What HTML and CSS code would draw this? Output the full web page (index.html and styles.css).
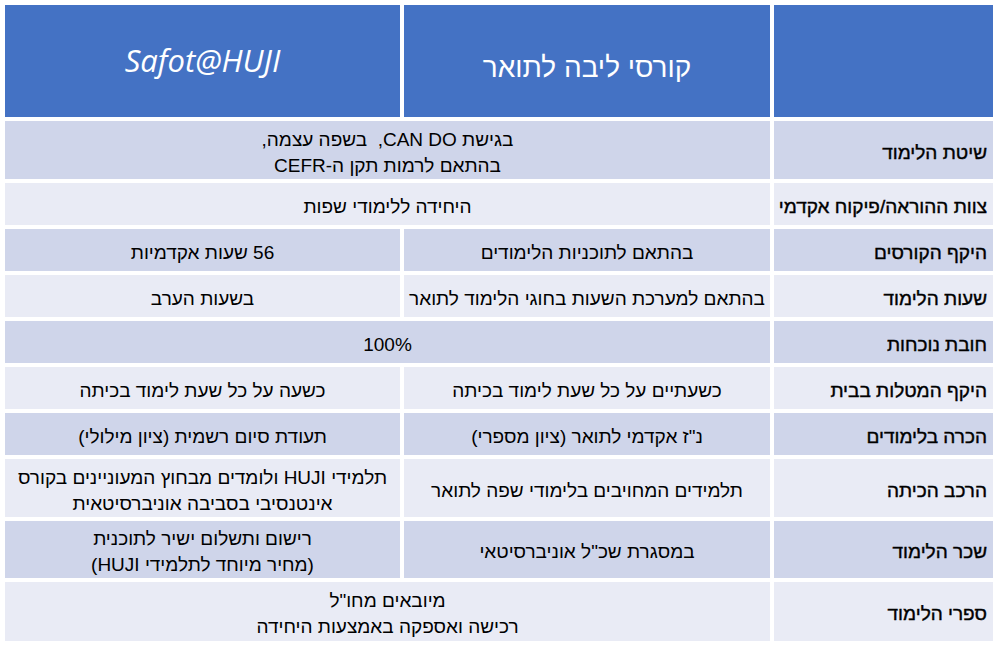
FILE: index.html
```html
<!DOCTYPE html>
<html lang="he">
<head>
<meta charset="utf-8">
<link rel="stylesheet" href="styles.css">
</head>
<body>
<div class="table">
  <div class="cell head"></div>
  <div class="cell head head-he">קורסי ליבה לתואר</div>
  <div class="cell head head-en">Safot@HUJI</div>

  <div class="cell label dark">שיטת הלימוד</div>
  <div class="cell val dark span">בגישת CAN DO,&nbsp; בשפה עצמה,<br>בהתאם לרמות תקן ה-CEFR</div>

  <div class="cell label light">צוות ההוראה/פיקוח אקדמי</div>
  <div class="cell val light span">היחידה ללימודי שפות</div>

  <div class="cell label dark">היקף הקורסים</div>
  <div class="cell val dark">בהתאם לתוכניות הלימודים</div>
  <div class="cell val dark">56 שעות אקדמיות</div>

  <div class="cell label light">שעות הלימוד</div>
  <div class="cell val light">בהתאם למערכת השעות בחוגי הלימוד לתואר</div>
  <div class="cell val light">בשעות הערב</div>

  <div class="cell label dark">חובת נוכחות</div>
  <div class="cell val dark span">100%</div>

  <div class="cell label light">היקף המטלות בבית</div>
  <div class="cell val light">כשעתיים על כל שעת לימוד בכיתה</div>
  <div class="cell val light">כשעה על כל שעת לימוד בכיתה</div>

  <div class="cell label dark">הכרה בלימודים</div>
  <div class="cell val dark">נ"ז אקדמי לתואר (ציון מספרי)</div>
  <div class="cell val dark">תעודת סיום רשמית (ציון מילולי)</div>

  <div class="cell label light">הרכב הכיתה</div>
  <div class="cell val light">תלמידים המחויבים בלימודי שפה לתואר</div>
  <div class="cell val light">תלמידי HUJI ולומדים מבחוץ המעוניינים בקורס<br>אינטנסיבי בסביבה אוניברסיטאית</div>

  <div class="cell label dark">שכר הלימוד</div>
  <div class="cell val dark">במסגרת שכ"ל אוניברסיטאי</div>
  <div class="cell val dark">רישום ותשלום ישיר לתוכנית<br>(מחיר מיוחד לתלמידי HUJI)</div>

  <div class="cell label light">ספרי הלימוד</div>
  <div class="cell val light span">מיובאים מחו"ל<br>רכישה ואספקה באמצעות היחידה</div>
</div>
</body>
</html>
```

FILE: styles.css
```css
html, body {
  margin: 0;
  padding: 0;
  background: #ffffff;
}

body {
  font-family: "Liberation Sans", "DejaVu Sans", sans-serif;
  color: #000000;
}

.table {
  display: grid;
  direction: rtl;
  grid-template-columns: 219px 366px 395px;
  grid-template-rows: 112px 58px 42px 42px 42px 42px 42px 42px 58px 57px 59px;
  column-gap: 4px;
  row-gap: 4px;
  width: 988px;
  margin: 5px 0 0 5px;
}

.cell {
  display: flex;
  align-items: center;
  font-size: 19px;
  line-height: 26px;
  padding-top: 5px;
  box-sizing: border-box;
}

.head {
  background: #4472c4;
  color: #ffffff;
  justify-content: center;
}

.head-he {
  font-size: 28px;
  padding-top: 14px;
}

.head-en {
  font-family: "Open Sans", "Liberation Sans", sans-serif;
  font-style: italic;
  font-size: 31px;
  padding-top: 0;
  padding-bottom: 2px;
}

.dark {
  background: #cfd5ea;
}

.light {
  background: #e9ebf5;
}

.label {
  justify-content: flex-start;
  padding-right: 6px;
  -webkit-text-stroke: 0.4px #000000;
}

.val {
  justify-content: center;
  text-align: center;
}

.span {
  grid-column: 2 / 4;
}
```
